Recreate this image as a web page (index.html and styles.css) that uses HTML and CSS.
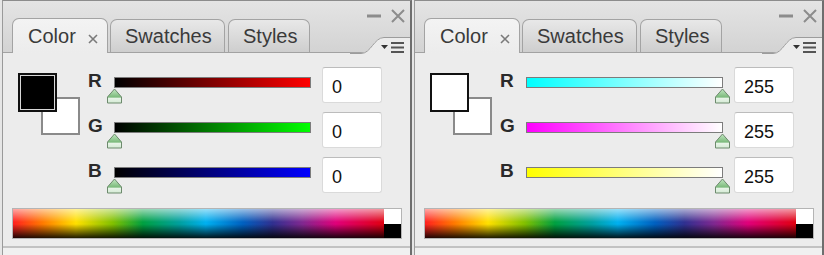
FILE: index.html
```html
<!DOCTYPE html>
<html lang="en">
  <head>
    <meta charset="UTF-8" />
    <title>Color panels</title>
    <link rel="stylesheet" href="styles.css">
  </head>
  <body>
    <div class="panels">
      <!-- Panel: foreground black -->
      <section class="panel">
        <header class="panel-head">
          <div class="tabs">
            <div class="tab tab-active">Color<svg class="tab-close" width="10" height="10" viewBox="0 0 10 10"><path d="M1 1L9 9M9 1L1 9" /></svg></div>
            <div class="tab tab-swatches">Swatches</div>
            <div class="tab tab-styles">Styles</div>
          </div>
          <div class="win-buttons">
            <svg class="win-min" width="14" height="4" viewBox="0 0 14 4"><rect x="0" y="0.5" width="14" height="3" /></svg>
            <svg class="win-close" width="14" height="14" viewBox="0 0 14 14"><path d="M1 1L13 13M13 1L1 13" /></svg>
          </div>
          <svg class="flyout" width="60" height="19" viewBox="0 0 60 19">
            <path class="flyout-fill" d="M0 19L0 18L11 18C21 18 24 2 34 2L60 2L60 19Z" />
            <path class="flyout-edge" d="M0 18.5L11 18.5C21 18.5 24 2.5 34 2.5L60 2.5" />
            <path class="flyout-arrow" d="M31 10L38 10L34.5 14Z" />
            <rect class="flyout-line" x="41" y="7" width="13" height="2" />
            <rect class="flyout-line" x="41" y="11.5" width="13" height="2" />
            <rect class="flyout-line" x="41" y="16" width="13" height="2" />
          </svg>
        </header>

        <div class="panel-body">
          <div class="color-row">
            <div class="swatch-stack">
              <div class="swatch swatch-bg"></div>
              <div class="swatch swatch-fg fg-black"></div>
            </div>
            <div class="sliders">
              <div class="slider-row">
                <span class="ch">R</span>
                <div class="track bar-red">
                  <svg class="thumb" width="17" height="16" viewBox="0 0 17 16"><use href="#thumb-shape" /></svg>
                </div>
                <div class="value">0</div>
              </div>
              <div class="slider-row">
                <span class="ch">G</span>
                <div class="track bar-green">
                  <svg class="thumb" width="17" height="16" viewBox="0 0 17 16"><use href="#thumb-shape" /></svg>
                </div>
                <div class="value">0</div>
              </div>
              <div class="slider-row">
                <span class="ch">B</span>
                <div class="track bar-blue">
                  <svg class="thumb" width="17" height="16" viewBox="0 0 17 16"><use href="#thumb-shape" /></svg>
                </div>
                <div class="value">0</div>
              </div>
            </div>
          </div>
          <div class="spectrum">
            <div class="spectrum-hues"></div>
            <div class="spectrum-bw"><span class="bw-white"></span><span class="bw-black"></span></div>
          </div>
        </div>
        <div class="panel-foot"></div>
      </section>

      <!-- Panel: foreground white -->
      <section class="panel">
        <header class="panel-head">
          <div class="tabs">
            <div class="tab tab-active">Color<svg class="tab-close" width="10" height="10" viewBox="0 0 10 10"><path d="M1 1L9 9M9 1L1 9" /></svg></div>
            <div class="tab tab-swatches">Swatches</div>
            <div class="tab tab-styles">Styles</div>
          </div>
          <div class="win-buttons">
            <svg class="win-min" width="14" height="4" viewBox="0 0 14 4"><rect x="0" y="0.5" width="14" height="3" /></svg>
            <svg class="win-close" width="14" height="14" viewBox="0 0 14 14"><path d="M1 1L13 13M13 1L1 13" /></svg>
          </div>
          <svg class="flyout" width="60" height="19" viewBox="0 0 60 19">
            <path class="flyout-fill" d="M0 19L0 18L11 18C21 18 24 2 34 2L60 2L60 19Z" />
            <path class="flyout-edge" d="M0 18.5L11 18.5C21 18.5 24 2.5 34 2.5L60 2.5" />
            <path class="flyout-arrow" d="M31 10L38 10L34.5 14Z" />
            <rect class="flyout-line" x="41" y="7" width="13" height="2" />
            <rect class="flyout-line" x="41" y="11.5" width="13" height="2" />
            <rect class="flyout-line" x="41" y="16" width="13" height="2" />
          </svg>
        </header>

        <div class="panel-body">
          <div class="color-row">
            <div class="swatch-stack">
              <div class="swatch swatch-bg"></div>
              <div class="swatch swatch-fg fg-white"></div>
            </div>
            <div class="sliders">
              <div class="slider-row">
                <span class="ch">R</span>
                <div class="track bar-cyan">
                  <svg class="thumb thumb-max" width="17" height="16" viewBox="0 0 17 16"><use href="#thumb-shape" /></svg>
                </div>
                <div class="value">255</div>
              </div>
              <div class="slider-row">
                <span class="ch">G</span>
                <div class="track bar-magenta">
                  <svg class="thumb thumb-max" width="17" height="16" viewBox="0 0 17 16"><use href="#thumb-shape" /></svg>
                </div>
                <div class="value">255</div>
              </div>
              <div class="slider-row">
                <span class="ch">B</span>
                <div class="track bar-yellow">
                  <svg class="thumb thumb-max" width="17" height="16" viewBox="0 0 17 16"><use href="#thumb-shape" /></svg>
                </div>
                <div class="value">255</div>
              </div>
            </div>
          </div>
          <div class="spectrum">
            <div class="spectrum-hues"></div>
            <div class="spectrum-bw"><span class="bw-white"></span><span class="bw-black"></span></div>
          </div>
        </div>
        <div class="panel-foot"></div>
      </section>
    </div>

    <!-- shared slider thumb -->
    <svg class="defs" width="0" height="0">
      <defs>
        <linearGradient id="thumb-fill" x1="0" y1="0" x2="0" y2="1">
          <stop offset="0" stop-color="#c4e8c4" />
          <stop offset="0.6" stop-color="#78b878" />
          <stop offset="0.62" stop-color="#eaf5ea" />
          <stop offset="1" stop-color="#d4ead4" />
        </linearGradient>
        <path id="thumb-shape" d="M8.5 1L15.5 9L15.5 15L1.5 15L1.5 9Z" fill="url(#thumb-fill)" stroke="#6d8a6d" stroke-width="1" stroke-linejoin="round" />
      </defs>
    </svg>
  </body>
</html>
```

FILE: styles.css
```css
/* page */
body {
  margin: 0;
  width: 824px;
  height: 255px;
  overflow: hidden;
  background-color: #e6e6e6;
  font-family: "Liberation Sans", Arial, sans-serif;
}

.panels {
  display: flex;
}

.defs {
  position: absolute;
}

/* panel frame */
.panel {
  box-sizing: border-box;
  width: 410px;
  height: 255px;
  margin-left: 2px;
  border-top: 1px solid #8c8c8c;
  border-left: 1px solid #9a9a9a;
  border-right: 2px solid #6e6e6e;
  background-color: #ececec;
  display: flex;
  flex-direction: column;
}

/* header with tabs */
.panel-head {
  position: relative;
  height: 51px;
  background: linear-gradient(#e4e4e4, #d3d3d3);
}

.tabs {
  display: flex;
  align-items: flex-end;
  height: 51px;
  padding-left: 9px;
}

.tab {
  box-sizing: border-box;
  height: 33px;
  padding-left: 14px;
  border: 1px solid #a3a3a3;
  border-bottom: none;
  border-radius: 7px 7px 0 0;
  background: linear-gradient(#e8e8e8, #cecece);
  font-size: 20px;
  line-height: 32px;
  color: #3a3a3a;
  white-space: nowrap;
}

.tab-active {
  position: relative;
  z-index: 1;
  width: 96px;
  height: 35px;
  margin-bottom: -1px;
  padding-left: 15px;
  background: linear-gradient(#f3f3f3, #ececec);
  line-height: 34px;
}

.tab-swatches {
  width: 115px;
  margin-left: 2px;
}

.tab-styles {
  width: 82px;
  margin-left: 3px;
}

.tab-close {
  margin-left: 12px;
  vertical-align: -1px;
}

.tab-close path {
  stroke: #7a7a7a;
  stroke-width: 1.6;
}

/* minimize / close */
.win-buttons {
  position: absolute;
  top: 8px;
  right: 5px;
  display: flex;
  align-items: center;
  gap: 10px;
}

.win-min rect {
  fill: #8c8c8c;
}

.win-close path {
  stroke: #8c8c8c;
  stroke-width: 2;
}

/* panel menu corner */
.flyout {
  position: absolute;
  right: 0;
  bottom: -2px;
  z-index: 1;
}

.flyout-fill {
  fill: #ececec;
}

.flyout-edge {
  fill: none;
  stroke: #9c9c9c;
  stroke-width: 1;
}

.flyout-arrow {
  fill: #333;
}

.flyout-line {
  fill: #555;
}

/* body */
.panel-body {
  flex: 1;
  border-top: 1px solid #a2a2a2;
  padding: 14px 0 0 9px;
}

.color-row {
  display: flex;
}

.swatch-stack {
  position: relative;
  width: 76px;
  height: 135px;
}

.swatch {
  position: absolute;
  box-sizing: border-box;
}

.swatch-fg {
  left: 6px;
  top: 6px;
  width: 39px;
  height: 39px;
  border: 2px solid #111;
}

.fg-black {
  background-color: #000;
  box-shadow: inset 0 0 0 1px #d8d8d8;
}

.fg-white {
  background-color: #fff;
}

.swatch-bg {
  left: 29px;
  top: 30px;
  width: 39px;
  height: 38px;
  border: 2px solid #8a8a8a;
  background-color: #fff;
}

/* sliders */
.sliders {
  display: flex;
  flex-direction: column;
}

.slider-row {
  display: flex;
  height: 45px;
}

.ch {
  width: 26px;
  padding-top: 3px;
  font-size: 19px;
  font-weight: bold;
  line-height: 22px;
  color: #2a2a2a;
}

.track {
  position: relative;
  box-sizing: border-box;
  width: 197px;
  height: 11px;
  margin-top: 10px;
  margin-right: 11px;
  border: 1px solid #7c7c7c;
}

.thumb {
  position: absolute;
  top: 10px;
  left: -9px;
}

.thumb-max {
  left: auto;
  right: -9px;
}

.bar-red { background: linear-gradient(to right, #000, #ff0000); }
.bar-green { background: linear-gradient(to right, #000, #00ff00); }
.bar-blue { background: linear-gradient(to right, #000, #0000ff); }
.bar-cyan { background: linear-gradient(to right, #00ffff, #ffffff); }
.bar-magenta { background: linear-gradient(to right, #ff00ff, #ffffff); }
.bar-yellow { background: linear-gradient(to right, #ffff00, #ffffff); }

.value {
  box-sizing: border-box;
  width: 60px;
  height: 36px;
  padding-left: 9px;
  border: 1px solid #dadada;
  border-top-color: #bcbcbc;
  border-radius: 3px;
  background-color: #fff;
  font-size: 18px;
  line-height: 38px;
  color: #111;
}

/* spectrum ramp */
.spectrum {
  box-sizing: border-box;
  display: flex;
  width: 390px;
  height: 31px;
  margin-top: 6px;
  border: 1px solid #b4b4b4;
}

.spectrum-hues {
  flex: 1;
  background:
    linear-gradient(to bottom, rgba(255, 255, 255, 0.6), rgba(255, 255, 255, 0) 45%, rgba(0, 0, 0, 0) 52%, rgba(0, 0, 0, 0.88)),
    linear-gradient(to right, #ff2020 0%, #ff7a00 8%, #ffe000 17%, #80c000 27%, #00a040 35%, #00a0a0 45%, #00b0f0 52%, #0060c0 62%, #303090 70%, #802890 78%, #e0007a 87%, #e00010 100%);
}

.spectrum-bw {
  display: flex;
  flex-direction: column;
  width: 17px;
}

.bw-white {
  flex: 1;
  background-color: #fff;
}

.bw-black {
  flex: 1;
  background-color: #000;
}

/* bottom strip */
.panel-foot {
  height: 7px;
  border-top: 2px solid #c2c2c2;
  background-color: #f0f0f0;
}
```
